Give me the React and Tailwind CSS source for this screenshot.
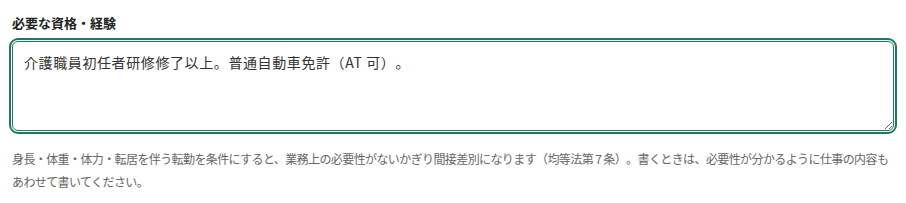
export default function App() {
  return (
    <div
      className="bg-white px-[12px] pt-[14px] text-[#222] [text-spacing-trim:space-all]"
      style={{ fontFamily: '"Noto Sans CJK JP", "Noto Sans", sans-serif' }}
    >
      <label className="block text-[13px] font-bold leading-[18px]">必要な資格・経験</label>
      <div className="mt-[9px]">
        <textarea
          className="block h-[90px] w-full resize-y rounded-[6px] border border-[#1e7a5c] px-[11px] py-[9px] text-[14px] leading-[22px] tracking-[0.6px] text-[#333] outline outline-2 outline-offset-[1px] outline-[#1e7a5c] [text-spacing-trim:space-all]"
          defaultValue="介護職員初任者研修修了以上。普通自動車免許（AT 可）。"
        />
      </div>
      <p className="mt-[16px] text-[12px] leading-[23px] tracking-[-0.6px] text-[#666]">
        身長・体重・体力・転居を伴う転勤を条件にすると、業務上の必要性がないかぎり間接差別になります（均等法第 7 条）。書くときは、必要性が分かるように仕事の内容もあわせて書いてください。
      </p>
    </div>
  );
}
